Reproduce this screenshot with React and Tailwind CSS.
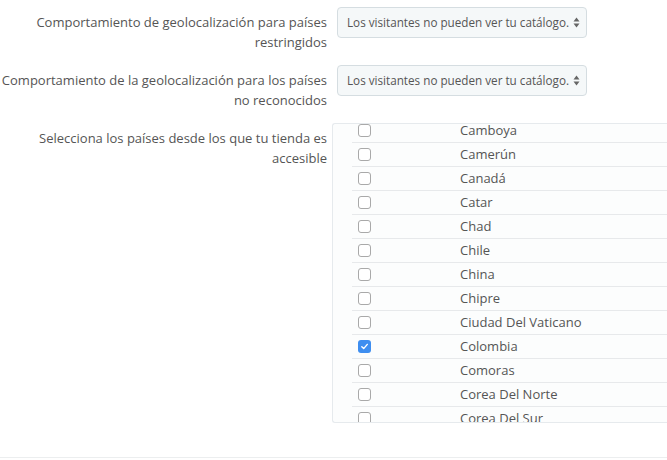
const countries = [
  { name: 'Camboya' },
  { name: 'Camerún' },
  { name: 'Canadá' },
  { name: 'Catar' },
  { name: 'Chad' },
  { name: 'Chile' },
  { name: 'China' },
  { name: 'Chipre' },
  { name: 'Ciudad Del Vaticano' },
  { name: 'Colombia', checked: true },
  { name: 'Comoras' },
  { name: 'Corea Del Norte' },
  { name: 'Corea Del Sur' },
  { name: 'Costa De Marfil' },
];

function FakeSelect({ value }) {
  return (
    <div className="flex h-[31px] w-[250px] items-center rounded-[4px] border border-[#d5dde1] bg-[#f5f8f9] pl-[9px] pr-[6px]">
      <span className="min-w-0 flex-1 overflow-hidden whitespace-nowrap text-[11.7px] text-[#555]">
        {value}
      </span>
      <svg width="7" height="11" viewBox="0 0 7 11" className="ml-[2px] shrink-0">
        <path d="M3.5 0.5 L6.5 4.5 H0.5 Z" fill="#666" />
        <path d="M3.5 10.5 L6.5 6.5 H0.5 Z" fill="#666" />
      </svg>
    </div>
  );
}

function Checkbox({ checked }) {
  if (checked) {
    return (
      <span className="flex h-[13px] w-[13px] items-center justify-center rounded-[3px] bg-[#3e8ef0]">
        <svg width="9" height="9" viewBox="0 0 9 9">
          <path d="M1.8 4.8 L3.7 6.6 L7.3 2.4" fill="none" stroke="#fff" strokeWidth="1.4" strokeLinecap="round" strokeLinejoin="round" />
        </svg>
      </span>
    );
  }

  return <span className="h-[13px] w-[13px] rounded-[3px] border border-[#a9a9a9] bg-white" />;
}

function FormRow({ label, children, className = '' }) {
  return (
    <div className={`grid grid-cols-[327px_1fr] ${className}`}>
      <p className="pt-[5px] text-right text-[13px] leading-[20px] text-[#555]">{label}</p>
      <div>{children}</div>
    </div>
  );
}

export default function App() {
  return (
    <div className="min-h-[460px] w-[667px] overflow-hidden bg-white pt-[7px] font-['Open_Sans',sans-serif]">
      <FormRow label="Comportamiento de geolocalización para países restringidos">
        <div className="pl-[10px]">
          <FakeSelect value="Los visitantes no pueden ver tu catálogo." />
        </div>
      </FormRow>

      <FormRow label="Comportamiento de la geolocalización para los países no reconocidos" className="mt-[13px]">
        <div className="pl-[10px]">
          <FakeSelect value="Los visitantes no pueden ver tu catálogo." />
        </div>
      </FormRow>

      <FormRow label="Selecciona los países desde los que tu tienda es accesible" className="mt-[13px]">
        <div className="ml-[5px] h-[300px] overflow-hidden rounded-bl-[3px] rounded-tl-[3px] border border-r-0 border-[#e6eaed] bg-[#fcfdfd] pl-[19px]">
          <div className="-mt-[5px]">
            {countries.map((country) => (
              <div
                key={country.name}
                className="flex h-[24px] items-center border-b border-[#e7e9eb] text-[13px] text-[#555]"
              >
                <div className="flex w-[108px] items-center pl-[6px]">
                  <Checkbox checked={country.checked} />
                </div>
                <span>{country.name}</span>
              </div>
            ))}
          </div>
        </div>
      </FormRow>

      <div className="mt-[34px] border-t border-[#eceeef]" />
    </div>
  );
}
